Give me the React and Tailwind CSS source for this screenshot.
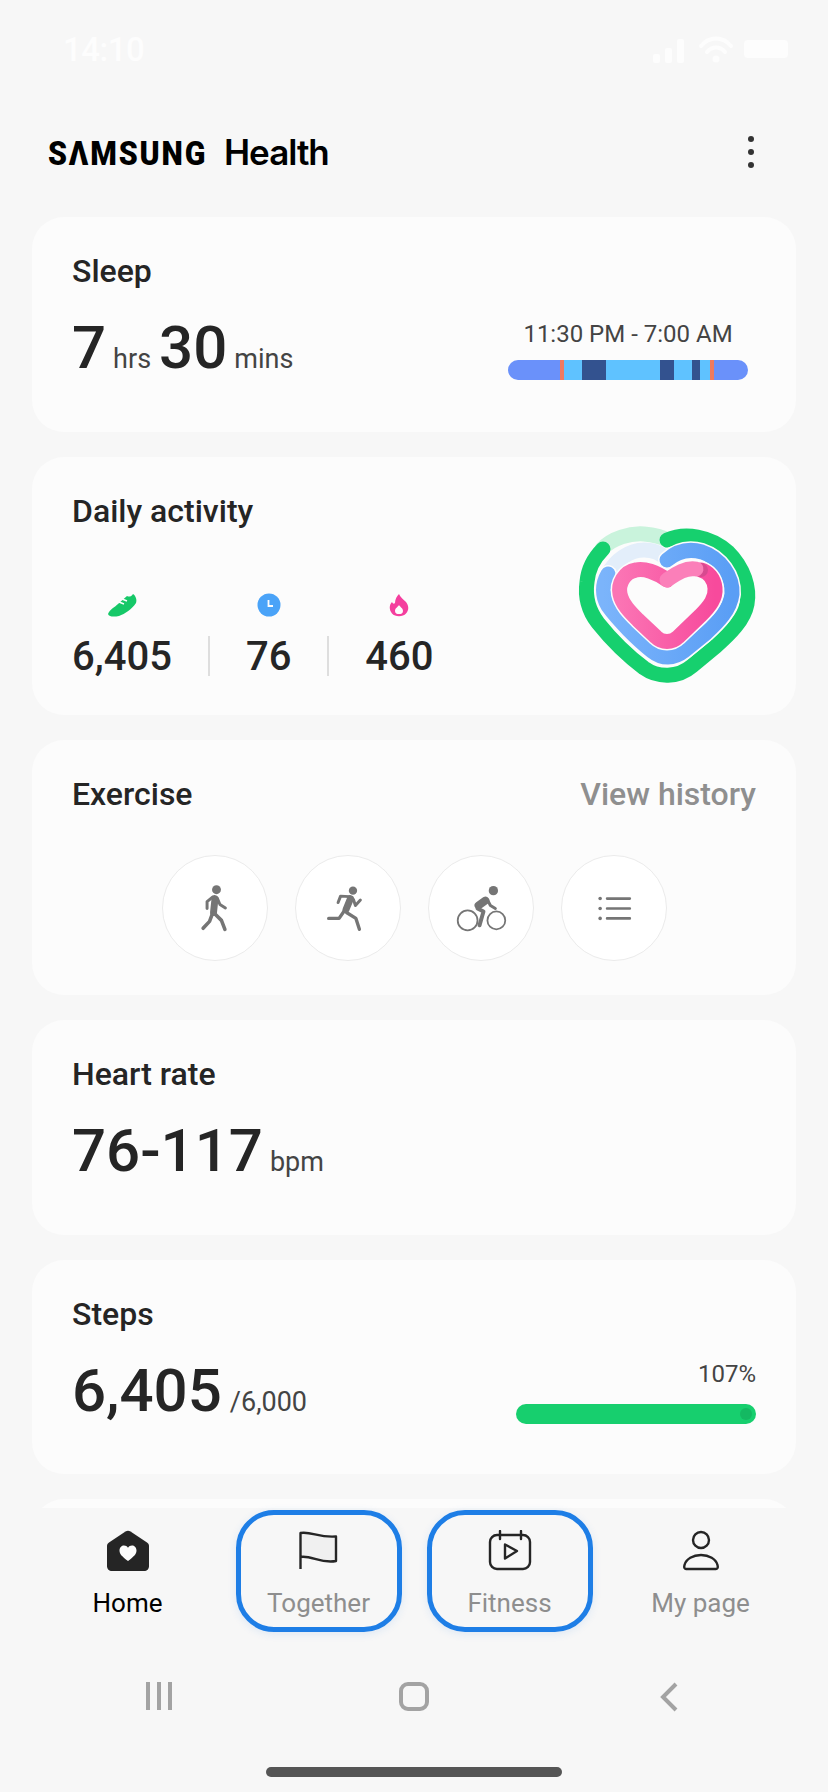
const SLEEP_SEGMENTS = [
  { w: 'w-[52px]', c: 'bg-[#6a91fa]' },
  { w: 'w-[4px]', c: 'bg-[#ef7a60]' },
  { w: 'w-[18px]', c: 'bg-[#5fc2ff]' },
  { w: 'w-[24px]', c: 'bg-[#33528f]' },
  { w: 'w-[54px]', c: 'bg-[#5fc2ff]' },
  { w: 'w-[14px]', c: 'bg-[#33528f]' },
  { w: 'w-[18px]', c: 'bg-[#5fc2ff]' },
  { w: 'w-[8px]', c: 'bg-[#33528f]' },
  { w: 'w-[10px]', c: 'bg-[#5fc2ff]' },
  { w: 'w-[4px]', c: 'bg-[#ef7a60]' },
  { w: 'w-[34px]', c: 'bg-[#6a91fa]' },
];

function StatusBar() {
  return (
    <div className="flex h-[100px] items-start justify-between pl-[63px] pr-[40px] pt-[31px] text-[#fdfdfd]">
      <span className="text-[33px] font-medium leading-[38px] tracking-[-0.5px]">14:10</span>
      <svg width="136" height="32" viewBox="0 0 136 32" className="mt-[2px]">
        <rect x="1" y="21" width="7" height="9" rx="2" fill="#fdfdfd" />
        <rect x="13" y="15" width="7" height="15" rx="2" fill="#fdfdfd" />
        <rect x="25" y="6" width="7" height="24" rx="2" fill="#fdfdfd" />
        <path d="M49 13C57 3 71 3 79 13" fill="none" stroke="#fdfdfd" strokeWidth="4" strokeLinecap="round" />
        <path d="M55 19C60 13 68 13 73 19" fill="none" stroke="#fdfdfd" strokeWidth="4" strokeLinecap="round" />
        <circle cx="64" cy="26" r="3.5" fill="#fdfdfd" />
        <rect x="92" y="7" width="44" height="18" rx="4" fill="#fdfdfd" />
      </svg>
    </div>
  );
}

function Header() {
  return (
    <header className="flex h-[117px] items-center justify-between pb-[13px] pl-[48px] pr-[74px]">
      <div className="flex items-center text-black">
        <span className="mt-[3px] w-[176px] origin-left scale-x-[0.92] text-[33px] font-black leading-[40px] tracking-[2px] font-['Roboto',sans-serif]">SΛMSUNG</span>
        <span className="text-[35px] font-semibold leading-[40px] tracking-[-1px] font-['Inter',sans-serif]">Health</span>
      </div>
      <div className="flex flex-col gap-[7px]">
        <div className="h-[6px] w-[6px] rounded-full bg-[#333]" />
        <div className="h-[6px] w-[6px] rounded-full bg-[#333]" />
        <div className="h-[6px] w-[6px] rounded-full bg-[#333]" />
      </div>
    </header>
  );
}

function Card({ className, children }) {
  return <section className={`shrink-0 rounded-[32px] bg-[#fcfcfc] pl-[40px] ${className}`}>{children}</section>;
}

function Title({ children }) {
  return <h2 className="text-[32px] font-medium leading-[36px] text-[#252525]">{children}</h2>;
}

function Big({ children }) {
  return <span className="text-[60px] font-medium leading-[70px] text-[#252525]">{children}</span>;
}

function Small({ children, className = '' }) {
  return <span className={`text-[27px] leading-[32px] text-[#444] ${className}`}>{children}</span>;
}

function SleepCard() {
  return (
    <Card className="h-[215px] pr-[48px] pt-[36px]">
      <Title>Sleep</Title>
      <div className="mt-[24px] flex items-start justify-between">
        <div className="flex items-baseline">
          <Big>7</Big>
          <Small className="ml-[7px] mr-[8px]">hrs</Small>
          <Big>30</Big>
          <Small className="ml-[7px]">mins</Small>
        </div>
        <div className="mt-[6px] flex flex-col items-center">
          <span className="text-[24px] leading-[30px] text-[#444]">11:30 PM - 7:00 AM</span>
          <div className="mt-[11px] flex h-[20px] overflow-hidden rounded-[10px]">
            {SLEEP_SEGMENTS.map((s, i) => (
              <div key={i} className={`${s.w} ${s.c}`} />
            ))}
          </div>
        </div>
      </div>
    </Card>
  );
}

function ActivityRing() {
  const greenPath = 'M43 39C34 48 28 60 27 72C25 86 28 100 38 113C50 128 68 146 84 158C98 168 118 168 132 156L155 137C170 124 184 110 187 94C190 78 184 58 168 42C150 26 125 22 107 30';
  const bluePath = 'M48 64C42 74 42 86 48 96C58 110 78 130 92 141C102 149 114 149 124 141L146 123C158 112 170 100 172 84C173 66 160 48 142 42C128 38 116 42 107 50';
  const pinkPath = 'M107 70C96 62 84 58 76 60C64 62 58 74 60 84C62 94 70 102 78 110L96 127C102 133 112 133 118 127L140 106C150 96 156 88 155 78C154 68 148 62 141 60';
  return (
    <svg width="220" height="190" viewBox="0 0 220 190" className="shrink-0">
      <defs>
        <linearGradient id="pinkRing" x1="0" y1="0" x2="1" y2="0">
          <stop offset="0" stopColor="#fb74b4" />
          <stop offset="1" stopColor="#f74a9c" />
        </linearGradient>
        <linearGradient id="blueRing" x1="0" y1="0" x2="1" y2="0">
          <stop offset="0" stopColor="#7bb4fb" />
          <stop offset="1" stopColor="#5a9ef5" />
        </linearGradient>
      </defs>
      <g fill="none" strokeLinecap="round">
        <path d="M42 39C52 28 70 23 84 24C94 25 102 27 107 30" stroke="#c9f3dc" strokeWidth="15" />
        <path d={greenPath} stroke="#16d06e" strokeWidth="15" />
        <path d="M48 64C55 50 70 40 84 40C94 40 102 44 107 50" stroke="#e3eefa" strokeWidth="15" />
        <path d={bluePath} stroke="#fcfcfc" strokeWidth="18" />
        <path d={bluePath} stroke="url(#blueRing)" strokeWidth="15" />
        <path d={pinkPath} stroke="#fcfcfc" strokeWidth="18" />
        <path d={pinkPath} stroke="url(#pinkRing)" strokeWidth="15" />
      </g>
      <circle cx="141" cy="60" r="7" fill="#d84a90" />
      <path d="M136 59C126 57 116 64 107 70" fill="none" stroke="#fb7fb9" strokeWidth="15" strokeLinecap="round" />
    </svg>
  );
}

function Shoe() {
  return (
    <svg width="30" height="24" viewBox="0 0 30 24">
      <path d="M1 21C3 16 8 14 11 11L20 3C22 4 24 4 26 1C29 3 30 7 29 10C25 16 18 21 12 23C7 24 2 24 1 21Z" fill="#16c868" />
      <path d="M12 9L17 11M15 6L20 8" stroke="#fdfdfd" strokeWidth="1.5" />
    </svg>
  );
}

function Clock() {
  return (
    <svg width="24" height="24" viewBox="0 0 24 24">
      <circle cx="12" cy="12" r="11.5" fill="#4aa3f8" />
      <path d="M11.5 7V13H16" fill="none" stroke="#fdfdfd" strokeWidth="1.8" />
    </svg>
  );
}

function Flame() {
  return (
    <svg width="20" height="24" viewBox="0 0 20 24">
      <path d="M10 1C11 4 14 6 17 9C20 13 20 17 17 20.5C14 24 6 24 3 20.5C0 17 0 12 3 9C4 11 5 11 6 10C6 6 8 3 10 1Z" fill="#f43f9e" />
      <path d="M10 12C11 14 14 15 14 18C14 20.5 12 21 10 21C8 21 6 20.5 6 18C6 15 9 14 10 12Z" fill="#fdfdfd" />
    </svg>
  );
}

function Stat({ icon, value }) {
  return (
    <div className="flex flex-col items-center">
      <div className="flex h-[30px] items-center">{icon}</div>
      <span className="mt-[14px] text-[40px] font-medium leading-[46px] text-[#252525]">{value}</span>
    </div>
  );
}

function DailyCard() {
  return (
    <Card className="flex h-[258px] justify-between pr-[16px] pt-[36px]">
      <div>
        <Title>Daily activity</Title>
        <div className="mt-[61px] flex items-end gap-[36px]">
          <Stat icon={<Shoe />} value="6,405" />
          <div className="mb-[4px] h-[40px] w-[2px] bg-[#dedede]" />
          <Stat icon={<Clock />} value="76" />
          <div className="mb-[4px] h-[40px] w-[2px] bg-[#dedede]" />
          <Stat icon={<Flame />} value="460" />
        </div>
      </div>
      <div className="mt-[17px]">
        <ActivityRing />
      </div>
    </Card>
  );
}

function Walk() {
  return (
    <svg viewBox="0 0 105 105" className="h-full w-full">
      <circle cx="54" cy="34" r="4.5" fill="#757575" />
      <g fill="none" stroke="#757575" strokeLinecap="round" strokeLinejoin="round">
        <path d="M52.5 43L51 57" strokeWidth="7" />
        <path d="M50 41.5L44.5 46L44.5 53" strokeWidth="3" />
        <path d="M55 43L57.5 49L63 52.5" strokeWidth="3" />
        <path d="M50 58L47 66L40.5 73" strokeWidth="3.6" />
        <path d="M52 58L59 65L62.5 74" strokeWidth="3.6" />
      </g>
    </svg>
  );
}

function Run() {
  return (
    <svg viewBox="0 0 105 105" className="h-full w-full">
      <circle cx="57.5" cy="35" r="4.2" fill="#757575" />
      <g fill="none" stroke="#757575" strokeLinecap="round" strokeLinejoin="round">
        <path d="M55 43L50.5 54" strokeWidth="7" />
        <path d="M54 41L45 40.5L42.5 47" strokeWidth="3" />
        <path d="M58 44L60 50L65 44.5" strokeWidth="3" />
        <path d="M49 55L43.5 63L33 63" strokeWidth="3.4" />
        <path d="M51 57L60.5 63L64 74" strokeWidth="3.4" />
      </g>
    </svg>
  );
}

function Bike() {
  return (
    <svg viewBox="0 0 105 105" className="h-full w-full">
      <circle cx="65" cy="35" r="4.7" fill="#757575" />
      <g fill="none" stroke="#757575" strokeLinecap="round" strokeLinejoin="round">
        <circle cx="39" cy="65" r="10" strokeWidth="1.8" />
        <circle cx="68" cy="65" r="9" strokeWidth="1.8" />
        <path d="M57 45L50 50" strokeWidth="8" />
        <path d="M60 46L62 50L67 53" strokeWidth="3" />
        <path d="M49 53L55 56L51 70" strokeWidth="4" />
      </g>
    </svg>
  );
}

function List() {
  return (
    <svg viewBox="0 0 105 105" className="h-full w-full">
      <g fill="#757575">
        <circle cx="38.5" cy="43" r="1.8" />
        <circle cx="38.5" cy="53" r="1.8" />
        <circle cx="38.5" cy="63" r="1.8" />
      </g>
      <path d="M45.5 43H68.5M45.5 53H68.5M45.5 63H68.5" stroke="#757575" strokeWidth="2.6" strokeLinecap="round" />
    </svg>
  );
}

function Round({ children }) {
  return <div className="h-[106px] w-[106px] rounded-full border border-[#ebebeb] bg-white">{children}</div>;
}

function ExerciseCard() {
  return (
    <Card className="h-[255px] pr-[40px] pt-[36px]">
      <div className="flex justify-between">
        <Title>Exercise</Title>
        <span className="text-[32px] font-medium leading-[36px] text-[#8f8f8f]">View history</span>
      </div>
      <div className="mt-[43px] flex justify-center gap-[27px]">
        <Round><Walk /></Round>
        <Round><Run /></Round>
        <Round><Bike /></Round>
        <Round><List /></Round>
      </div>
    </Card>
  );
}

function HeartCard() {
  return (
    <Card className="h-[215px] pr-[40px] pt-[36px]">
      <Title>Heart rate</Title>
      <div className="mt-[24px] flex items-baseline">
        <Big>76-117</Big>
        <Small className="ml-[7px]">bpm</Small>
      </div>
    </Card>
  );
}

function StepsCard() {
  return (
    <Card className="h-[214px] pr-[40px] pt-[36px]">
      <Title>Steps</Title>
      <div className="mt-[24px] flex items-start justify-between">
        <div className="flex items-baseline">
          <Big>6,405</Big>
          <Small className="ml-[8px]">/6,000</Small>
        </div>
        <div className="mt-[4px] flex flex-col items-end">
          <span className="text-[24px] leading-[28px] text-[#444]">107%</span>
          <div className="mt-[16px] flex h-[20px] w-[240px] items-center justify-end rounded-full bg-[#17cf6e] pr-[4px]">
            <div className="h-[12px] w-[12px] rounded-full bg-[#14b962]" />
          </div>
        </div>
      </div>
    </Card>
  );
}

function HomeIcon() {
  return (
    <svg width="44" height="42" viewBox="0 0 44 42">
      <path d="M19.5 1.5C21 0.5 23 0.5 24.5 1.5L41 12.5C42.3 13.4 43 14.6 43 16V36C43 39 41 41 38 41H6C3 41 1 39 1 36V16C1 14.6 1.7 13.4 3 12.5Z" fill="#252525" />
      <path d="M22 31C16 26.5 13.5 24 13.5 20.5C13.5 17.5 15.7 15.5 18 15.5C19.8 15.5 21 16.4 22 17.8C23 16.4 24.2 15.5 26 15.5C28.3 15.5 30.5 17.5 30.5 20.5C30.5 24 28 26.5 22 31Z" fill="#fdfdfd" />
    </svg>
  );
}

function FlagIcon() {
  return (
    <svg width="44" height="42" viewBox="0 0 44 42" fill="none">
      <path d="M4 3C14 1 22 9 39 6V31C24 34 14 24 4 27Z" fill="#f0f0f0" />
      <path d="M3.5 39V3C14 1 22 8 39 6.5V31C24 34 14 25 3.5 27" stroke="#252525" strokeWidth="2.4" strokeLinejoin="round" />
    </svg>
  );
}

function FitnessIcon() {
  return (
    <svg width="44" height="42" viewBox="0 0 44 42" fill="none" stroke="#252525" strokeWidth="2.4" strokeLinejoin="round">
      <rect x="2" y="5" width="40" height="34" rx="7" />
      <path d="M12 1V9M33 1V9" strokeLinecap="round" />
      <path d="M17 14.5L29 21L17 28.5Z" />
    </svg>
  );
}

function PersonIcon() {
  return (
    <svg width="44" height="42" viewBox="0 0 44 42" fill="none" stroke="#252525" strokeWidth="2.4">
      <circle cx="22" cy="10" r="8" />
      <path d="M7 39C5 39 5 37 5.5 35C7 29 14 25 22 25C30 25 37 29 38.5 35C39 37 39 39 37 39Z" strokeLinejoin="round" />
    </svg>
  );
}

function Tab({ icon, label, active, focused }) {
  return (
    <div className={`flex h-[122px] w-[166px] flex-col items-center rounded-[38px] ${focused ? 'border-[5px] border-[#1e7ee6] pt-[15px] shadow-[0_2px_8px_rgba(30,126,230,0.12)]' : 'pt-[20px]'}`}>
      {icon}
      <span className={`mt-[15px] text-[26px] leading-[32px] ${active ? 'text-black' : 'text-[#8e8e8e]'}`}>{label}</span>
    </div>
  );
}

function BottomNav() {
  return (
    <nav className="mt-[2px] grid grid-cols-4 justify-items-center px-[32px]">
      <Tab icon={<HomeIcon />} label="Home" active />
      <Tab icon={<FlagIcon />} label="Together" focused />
      <Tab icon={<FitnessIcon />} label="Fitness" focused />
      <Tab icon={<PersonIcon />} label="My page" />
    </nav>
  );
}

function SystemNav() {
  return (
    <div className="mt-[50px] grid grid-cols-3 justify-items-center px-[32px]">
      <div className="flex h-[28px] items-center gap-[7px]">
        <div className="h-[28px] w-[4px] bg-[#a3a3a3]" />
        <div className="h-[28px] w-[4px] bg-[#a3a3a3]" />
        <div className="h-[28px] w-[4px] bg-[#a3a3a3]" />
      </div>
      <div className="h-[29px] w-[30px] rounded-[9px] border-[4px] border-[#a3a3a3]" />
      <svg width="20" height="30" viewBox="0 0 20 30" fill="none">
        <path d="M17 2L4 15L17 28" stroke="#a3a3a3" strokeWidth="4" />
      </svg>
    </div>
  );
}

export default function App() {
  return (
    <div className="flex h-[1792px] w-[828px] flex-col overflow-hidden bg-[#f7f7f7] font-['Roboto',sans-serif]">
      <StatusBar />
      <Header />
      <main className="flex h-[1291px] shrink-0 flex-col gap-[25px] overflow-hidden px-[32px]">
        <SleepCard />
        <DailyCard />
        <ExerciseCard />
        <HeartCard />
        <StepsCard />
        <Card className="h-[200px]" />
      </main>
      <BottomNav />
      <SystemNav />
      <div className="mt-[55px] flex justify-center">
        <div className="h-[10px] w-[296px] rounded-full bg-[#555]" />
      </div>
    </div>
  );
}
